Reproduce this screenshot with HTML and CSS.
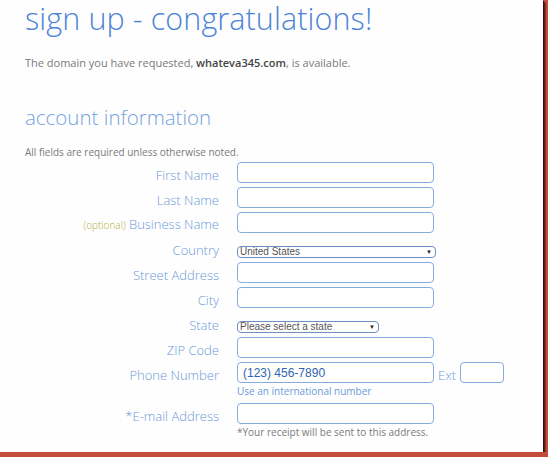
FILE: index.html
```html
<!DOCTYPE html>
<html>
<head>
<meta charset="utf-8">
<title>sign up - congratulations!</title>
<link rel="stylesheet" href="styles.css">
</head>
<body>
<div class="page">
  <h1 class="title">sign up - congratulations!</h1>
  <p class="domain">The domain you have requested, <b>whateva345.com</b>, is available.</p>
  <h2 class="section">account information</h2>
  <p class="required">All fields are required unless otherwise noted.</p>
  <form class="form">
    <div class="row"><label class="label">First Name</label><input class="field" type="text"></div>
    <div class="row"><label class="label">Last Name</label><input class="field" type="text"></div>
    <div class="row"><label class="label"><span class="optional">(optional)</span> Business Name</label><input class="field" type="text"></div>
    <div class="row"><label class="label">Country</label><span class="select select-country"><select><option>United States</option></select><span class="arrow">▼</span></span></div>
    <div class="row"><label class="label">Street Address</label><input class="field" type="text"></div>
    <div class="row"><label class="label">City</label><input class="field" type="text"></div>
    <div class="row"><label class="label">State</label><span class="select select-state"><select><option>Please select a state</option></select><span class="arrow">▼</span></span></div>
    <div class="row"><label class="label">ZIP Code</label><input class="field" type="text"></div>
    <div class="row"><label class="label">Phone Number</label><input class="field phone" type="text" value="(123) 456-7890"><span class="ext-label">Ext</span><input class="field ext" type="text"></div>
    <div class="hint-row"><a class="hint">Use an international number</a></div>
    <div class="row"><label class="label">*E-mail Address</label><input class="field" type="text"></div>
    <div class="note-row"><span class="note">*Your receipt will be sent to this address.</span></div>
  </form>
</div>
</body>
</html>
```
FILE: styles.css
```css
html {
  background: #c24b3c;
}
body {
  margin: 0;
  background: #c24b3c;
}
.page {
  width: 543px;
  height: 452px;
  box-sizing: border-box;
  background: #fefefe;
  padding-left: 25px;
  padding-top: 1px;
  overflow: hidden;
  box-shadow: 1px 1px 0 #2e120d, 2px 2px 0 #5a2118, 3px 3px 0 #8a3226;
  font-family: "Open Sans", "Liberation Sans", sans-serif;
}
.title {
  margin: 0;
  font-size: 30.5px;
  line-height: 34px;
  font-weight: 300;
  color: #4c83d6;
  letter-spacing: 0.1px;
}
.domain {
  margin: 20px 0 0;
  font-size: 11px;
  line-height: 16px;
  font-weight: 400;
  color: #7a7a7a;
}
.domain b {
  color: #444;
  font-weight: 600;
}
.section {
  margin: 32px 0 0;
  font-size: 20.5px;
  line-height: 28px;
  font-weight: 300;
  color: #76a3de;
}
.required {
  margin: 14px 0 0;
  font-size: 10px;
  line-height: 14px;
  color: #7a7a7a;
}
.form {
  margin: 3px 0 0;
  display: flex;
  flex-direction: column;
}
.row {
  display: flex;
  align-items: flex-end;
  height: 21px;
  margin-bottom: 4px;
}
.label {
  width: 194px;
  margin-right: 18px;
  text-align: right;
  font-size: 13px;
  line-height: 16px;
  font-weight: 300;
  color: #6d9ad8;
  white-space: nowrap;
}
.optional {
  font-size: 10px;
  color: #b3ad36;
}
.field {
  box-sizing: border-box;
  width: 197px;
  height: 21px;
  margin: 0;
  padding: 0 5px;
  border: 1px solid #86acde;
  border-radius: 4px;
  background: #fff;
  font-family: "Liberation Sans", Arial, sans-serif;
  font-size: 12px;
  color: #2f64b0;
  outline: none;
}
.select {
  box-sizing: border-box;
  display: flex;
  align-items: center;
  height: 12px;
  margin-bottom: 0;
  border: 1px solid #6e8fc2;
  border-radius: 4px;
  background: #fff;
}
.select-country {
  width: 199px;
}
.select-state {
  width: 142px;
}
.select select {
  flex: 1;
  min-width: 0;
  appearance: none;
  -webkit-appearance: none;
  border: none;
  background: transparent;
  padding: 0 0 0 2px;
  margin: 0;
  height: 10px;
  font-family: "Liberation Sans", Arial, sans-serif;
  font-size: 10px;
  line-height: 10px;
  color: #555;
  outline: none;
}
.arrow {
  font-size: 6px;
  line-height: 10px;
  color: #222;
  margin-right: 3px;
}
.ext-label {
  margin-left: 4px;
  font-size: 13px;
  line-height: 16px;
  font-weight: 300;
  color: #6d9ad8;
}
.ext {
  width: 44px;
  margin-left: 4px;
}
.hint-row {
  display: flex;
  height: 16px;
  margin-top: -4px;
  margin-bottom: 4px;
  padding-left: 212px;
  align-items: center;
}
.hint {
  font-size: 10px;
  line-height: 16px;
  color: #6d9ad8;
}
.note-row {
  display: flex;
  margin-top: -4px;
  padding-left: 212px;
  height: 16px;
  align-items: center;
}
.note {
  font-size: 10px;
  line-height: 16px;
  color: #7a7a7a;
}
```
